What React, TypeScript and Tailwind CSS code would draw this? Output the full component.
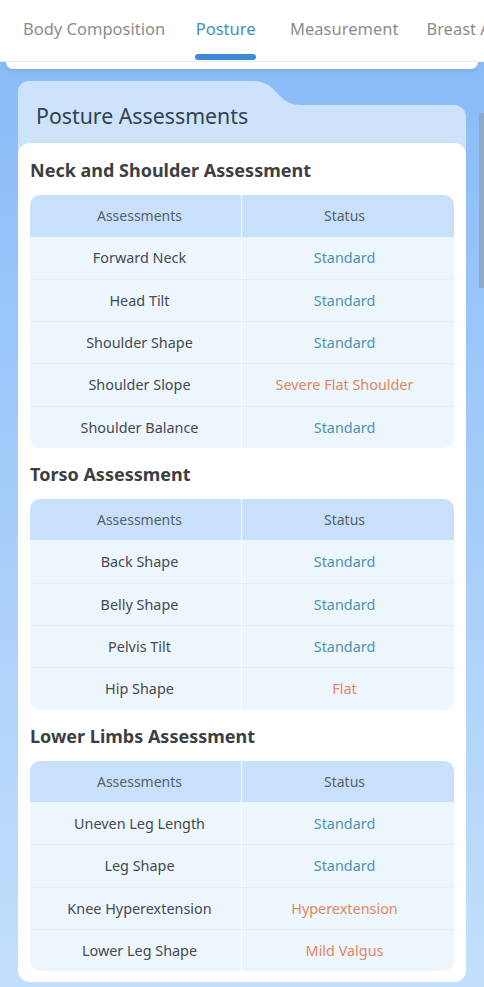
type Row = { name: string; status: string; warn?: boolean };

const sections: { title: string; rows: Row[] }[] = [
  {
    title: "Neck and Shoulder Assessment",
    rows: [
      { name: "Forward Neck", status: "Standard" },
      { name: "Head Tilt", status: "Standard" },
      { name: "Shoulder Shape", status: "Standard" },
      { name: "Shoulder Slope", status: "Severe Flat Shoulder", warn: true },
      { name: "Shoulder Balance", status: "Standard" },
    ],
  },
  {
    title: "Torso Assessment",
    rows: [
      { name: "Back Shape", status: "Standard" },
      { name: "Belly Shape", status: "Standard" },
      { name: "Pelvis Tilt", status: "Standard" },
      { name: "Hip Shape", status: "Flat", warn: true },
    ],
  },
  {
    title: "Lower Limbs Assessment",
    rows: [
      { name: "Uneven Leg Length", status: "Standard" },
      { name: "Leg Shape", status: "Standard" },
      { name: "Knee Hyperextension", status: "Hyperextension", warn: true },
      { name: "Lower Leg Shape", status: "Mild Valgus", warn: true },
    ],
  },
];

const tabs = ["Body Composition", "Posture", "Measurement", "Breast Assessment"];

const AssessmentTable = ({ rows }: { rows: Row[] }) => {
  return (
    <div className="rounded-[10px] overflow-hidden bg-[#edf5fd]">
      <div className="grid grid-cols-2 h-[41.5px] bg-[#c9e0fa] text-[14px] text-[#56606c]">
        <div className="flex items-center justify-center pl-[8px] border-r border-white">
          Assessments
        </div>
        <div className="flex items-center justify-center pr-[7px]">Status</div>
      </div>
      {rows.map((row, i) => (
        <div
          key={row.name}
          className={`grid grid-cols-2 h-[42.3px] text-[14.4px] ${
            i > 0 ? "border-t border-[#e4eefa]" : ""
          }`}
        >
          <div className="flex items-center justify-center pl-[8px] border-r border-white text-[#464a4f]">
            {row.name}
          </div>
          <div
            className={`flex items-center justify-center pr-[7px] ${
              row.warn ? "text-[#e3875b]" : "text-[#4c94b1]"
            }`}
          >
            {row.status}
          </div>
        </div>
      ))}
    </div>
  );
};

export default function App() {
  return (
    <div
      className="relative w-[484px] h-[987px] overflow-hidden bg-gradient-to-b from-[#86b9f7] to-[#c3dffc]"
      style={{ fontFamily: '"Noto Sans", "Liberation Sans", sans-serif' }}
    >
      {/* tab bar */}
      <header className="bg-white h-[62px] flex items-start pl-[23px] whitespace-nowrap border-b border-[#eef0f3]">
        {tabs.map((t, i) => (
          <div
            key={t}
            className={`flex flex-col items-center pt-[16px] ${
              i === 1 ? "ml-[30px]" : i === 2 ? "ml-[34px]" : i === 3 ? "ml-[28px]" : ""
            }`}
          >
            <span
              className={`text-[16.5px] leading-[26px] ${
                t === "Posture" ? "text-[#3f8fc2]" : "text-[#8c8c8c]"
              }`}
            >
              {t}
            </span>
            {t === "Posture" && (
              <div className="mt-[12px] h-[6px] w-[61px] rounded-full bg-[#3f8ad8]" />
            )}
          </div>
        ))}
      </header>
      <div className="mx-[6px] h-[7px] bg-white rounded-b-[14px] shadow-[0_2px_4px_rgba(80,120,180,0.25)]" />

      {/* posture panel */}
      <section className="mx-[18px] mt-[12px]">
        <svg width="448" height="24" viewBox="0 0 448 24" className="block">
          <path
            d="M0 24 V12 Q0 0 12 0 H236 Q246 0 254 7 L264 17 Q271 24 282 24 Z"
            fill="#cce3fb"
          />
        </svg>
        <div className="flex flex-col h-[50px] bg-[#cce3fb] rounded-tr-[12px]">
          <h1 className="-mt-[3px] pl-[18px] text-[21.3px] leading-[28px] text-[#33414f]">
            Posture Assessments
          </h1>
        </div>
        <div className="relative -mt-[12px] bg-white rounded-[12px] px-[12px] pt-[14px] pb-[11px]">
          {sections.map((s, i) => (
            <div key={s.title} className={i > 0 ? "mt-[13px]" : ""}>
              <h2 className="text-[18px] leading-[26px] font-bold text-[#3b3f44] mb-[12px]">
                {s.title}
              </h2>
              <AssessmentTable rows={s.rows} />
            </div>
          ))}
        </div>
      </section>

      {/* scrollbar thumb */}
      <div className="absolute right-0 top-[113px] w-[5px] h-[175px] bg-[#8fa9c8]" />
    </div>
  );
}
